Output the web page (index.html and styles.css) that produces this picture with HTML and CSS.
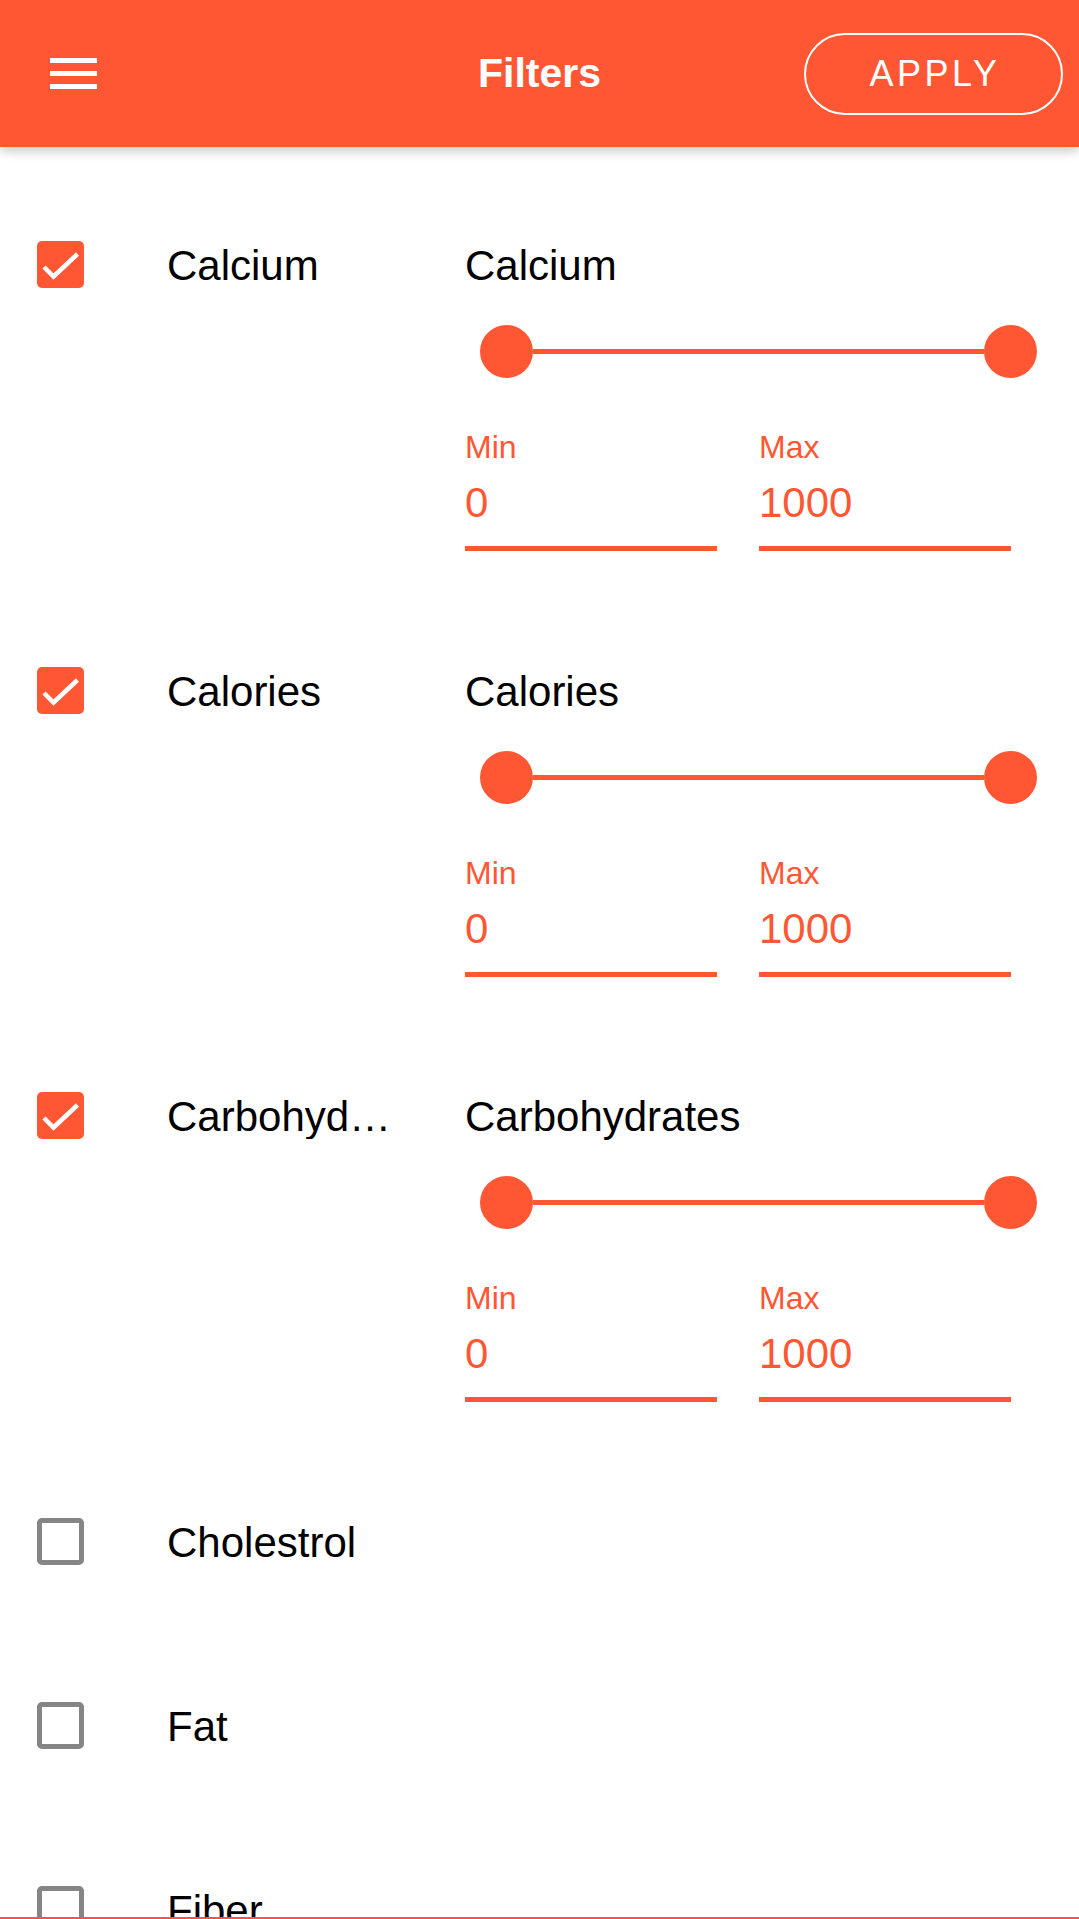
FILE: index.html
```html
<!DOCTYPE html>
<html lang="en">
<head>
<meta charset="utf-8">
<title>Filters</title>
<link rel="stylesheet" href="styles.css">
</head>
<body>
<header class="topbar">
  <button class="menu-btn" aria-label="Menu"><span></span><span></span><span></span></button>
  <h1 class="title">Filters</h1>
  <div class="actions"><button class="apply-btn">APPLY</button></div>
</header>

<main class="filter-list">
  <section class="filter-row is-active">
    <span class="checkbox checked"><svg viewBox="0 0 47 47" width="47" height="47"><polyline points="7,26 16.5,35.5 40.5,13" fill="none" stroke="#fff" stroke-width="4.5"/></svg></span>
    <span class="filter-name">Calcium</span>
    <div class="filter-detail">
      <div class="detail-title">Calcium</div>
      <div class="range-slider"><span class="thumb"></span><span class="track"></span><span class="thumb"></span></div>
      <div class="range-inputs">
        <div class="range-field"><span class="field-label">Min</span><span class="field-value">0</span></div>
        <div class="range-field"><span class="field-label">Max</span><span class="field-value">1000</span></div>
      </div>
    </div>
  </section>

  <section class="filter-row is-active">
    <span class="checkbox checked"><svg viewBox="0 0 47 47" width="47" height="47"><polyline points="7,26 16.5,35.5 40.5,13" fill="none" stroke="#fff" stroke-width="4.5"/></svg></span>
    <span class="filter-name">Calories</span>
    <div class="filter-detail">
      <div class="detail-title">Calories</div>
      <div class="range-slider"><span class="thumb"></span><span class="track"></span><span class="thumb"></span></div>
      <div class="range-inputs">
        <div class="range-field"><span class="field-label">Min</span><span class="field-value">0</span></div>
        <div class="range-field"><span class="field-label">Max</span><span class="field-value">1000</span></div>
      </div>
    </div>
  </section>

  <section class="filter-row is-active">
    <span class="checkbox checked"><svg viewBox="0 0 47 47" width="47" height="47"><polyline points="7,26 16.5,35.5 40.5,13" fill="none" stroke="#fff" stroke-width="4.5"/></svg></span>
    <span class="filter-name">Carbohydrates</span>
    <div class="filter-detail">
      <div class="detail-title">Carbohydrates</div>
      <div class="range-slider"><span class="thumb"></span><span class="track"></span><span class="thumb"></span></div>
      <div class="range-inputs">
        <div class="range-field"><span class="field-label">Min</span><span class="field-value">0</span></div>
        <div class="range-field"><span class="field-label">Max</span><span class="field-value">1000</span></div>
      </div>
    </div>
  </section>

  <section class="filter-row">
    <span class="checkbox"></span>
    <span class="filter-name">Cholestrol</span>
  </section>

  <section class="filter-row">
    <span class="checkbox"></span>
    <span class="filter-name">Fat</span>
  </section>

  <section class="filter-row">
    <span class="checkbox"></span>
    <span class="filter-name">Fiber</span>
  </section>
</main>

<div class="bottom-edge"></div>
</body>
</html>
```

FILE: styles.css
```css
body {
  margin: 0;
  font-family: "Liberation Sans", Arial, sans-serif;
  background: #fff;
  color: #000;
}

.topbar {
  position: relative;
  z-index: 1;
  height: 147px;
  background: #ff5733;
  display: grid;
  grid-template-columns: 1fr auto 1fr;
  align-items: center;
  box-shadow: 0 4px 10px rgba(0, 0, 0, 0.22);
}

.menu-btn {
  justify-self: start;
  margin-left: 50px;
  width: 47px;
  height: 31px;
  padding: 0;
  border: 0;
  background: none;
  display: flex;
  flex-direction: column;
  justify-content: space-between;
}

.menu-btn span {
  display: block;
  height: 5px;
  background: #fff;
}

.title {
  margin: 0;
  font-size: 41px;
  font-weight: 700;
  line-height: 47px;
  color: #fff;
}

.actions {
  justify-self: end;
  margin-right: 16px;
  display: flex;
}

.apply-btn {
  width: 259px;
  height: 82px;
  box-sizing: border-box;
  border: 2px solid #fff;
  border-radius: 41px;
  background: transparent;
  color: #fff;
  font-family: "Liberation Sans", Arial, sans-serif;
  font-size: 36px;
  letter-spacing: 3.5px;
  padding: 0 0 0 3px;
}

.filter-list {
  padding-top: 25px;
}

.filter-row {
  display: flex;
  align-items: flex-start;
  padding: 69px 0 68px 37px;
}

.filter-row.is-active {
  padding-bottom: 46.5px;
}

.checkbox {
  flex: none;
  width: 47px;
  height: 47px;
  box-sizing: border-box;
  border: 5px solid #858585;
  border-radius: 5px;
  display: block;
}

.checkbox.checked {
  border: 0;
  background: #ff5733;
}

.checkbox svg {
  display: block;
}

.filter-name {
  flex: none;
  margin-left: 83px;
  width: 225px;
  box-sizing: border-box;
  padding-top: 3px;
  font-size: 42px;
  line-height: 44px;
  white-space: nowrap;
  overflow: hidden;
  text-overflow: ellipsis;
}

.filter-detail {
  flex: 1;
  margin-left: 73px;
}

.detail-title {
  padding-top: 3px;
  font-size: 42px;
  line-height: 44px;
}

.range-slider {
  display: flex;
  align-items: center;
  margin: 37px 0 0 15px;
  width: 557px;
  height: 53px;
}

.thumb {
  flex: none;
  width: 53px;
  height: 53px;
  border-radius: 50%;
  background: #ff5733;
}

.track {
  flex: 1;
  height: 5px;
  background: #ff5733;
}

.range-inputs {
  display: grid;
  grid-template-columns: 252px 252px;
  column-gap: 42px;
  margin-top: 51px;
}

.range-field {
  display: flex;
  flex-direction: column;
  padding-bottom: 20px;
  border-bottom: 5px solid #ff5733;
  color: #ff5733;
}

.field-label {
  font-size: 32px;
  line-height: 37px;
}

.field-value {
  margin-top: 13px;
  font-size: 42px;
  line-height: 47px;
}

.bottom-edge {
  position: fixed;
  left: 0;
  right: 0;
  bottom: 0;
  height: 2px;
  background: #ff5733;
}
```
